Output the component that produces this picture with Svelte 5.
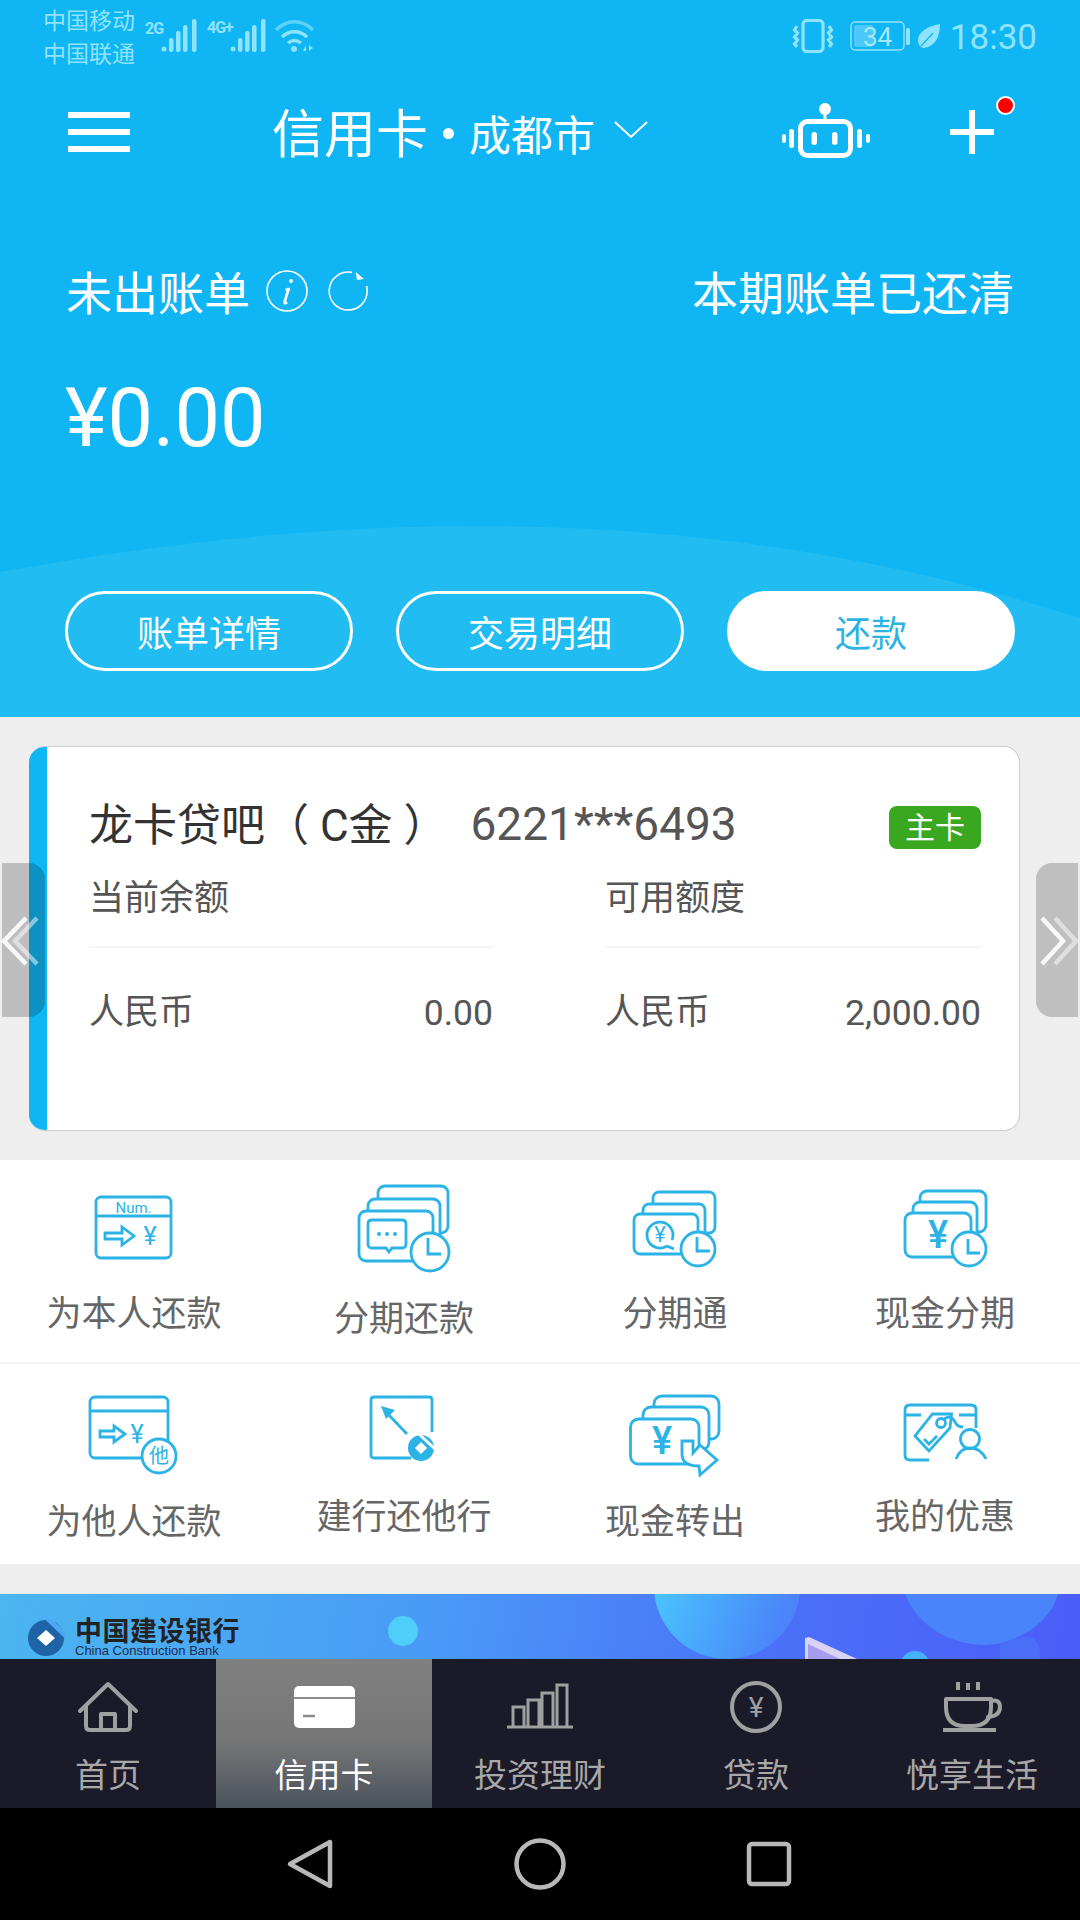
<script>
	const tabs = ['首页', '信用卡', '投资理财', '贷款', '悦享生活'];
</script>

<div class="phone">
	<header class="head">
		<svg class="wave" viewBox="0 0 1080 217" width="1080" height="217">
			<path d="M0 72C200 36 350 26 480 26C700 26 900 60 1080 118V217H0Z" fill="#20bcf2" />
		</svg>

		<div class="status">
			<div class="carriers"><span>中国移动</span><span>中国联通</span></div>
			<svg class="signal" width="172" height="36" viewBox="0 0 172 36" fill="#8fe3fd">
				<text class="net" x="0" y="16">2G</text>
				<circle cx="19" cy="31" r="2.5" />
				<rect x="24" y="20" width="4.5" height="14" rx="2" />
				<rect x="31" y="13" width="4.5" height="21" rx="2" />
				<rect x="38" y="7" width="4.5" height="27" rx="2" />
				<rect x="47" y="1" width="4.5" height="33" rx="2" />
				<text class="net" x="62" y="15">4G+</text>
				<circle cx="88" cy="31" r="2.5" />
				<rect x="93" y="20" width="4.5" height="14" rx="2" />
				<rect x="100" y="13" width="4.5" height="21" rx="2" />
				<rect x="107" y="7" width="4.5" height="27" rx="2" />
				<rect x="116" y="1" width="4.5" height="33" rx="2" />
				<g fill="none" stroke="#8fe3fd" stroke-width="3.4">
					<path d="M131 12C142 1 157 1 168 12" opacity=".6" />
					<path d="M137 19C144 12 155 12 162 19" />
					<path d="M143 25C147 22 152 22 156 25" />
				</g>
				<circle cx="149" cy="31" r="3" />
				<path d="M161 27l-3 6h3zM164 27l4 3-4 3z" />
			</svg>
			<div class="status-right">
				<svg width="42" height="34" viewBox="0 0 42 34" fill="none" stroke="#8fe3fd" stroke-width="3.2">
					<rect x="11" y="1.5" width="20" height="31" rx="4" />
					<path d="M5 7l-2.5 4 3 3-3 4 3 3-3 4 2.5 3M37 7l2.5 4-3 3 3 4-3 3 3 4-2.5 3" />
				</svg>
				<svg class="bat" width="60" height="30" viewBox="0 0 60 30">
					<rect x="1" y="1" width="53" height="28" rx="4" fill="none" stroke="#8fe3fd" stroke-width="1.5" />
					<rect x="4" y="4" width="19" height="22" rx="2" fill="#4dc8fb" />
					<rect x="56" y="7" width="4" height="17" rx="1.5" fill="#8fe3fd" />
					<text x="27.5" y="24.5" text-anchor="middle" font-size="26" fill="#a6e8fd">34</text>
				</svg>
				<svg width="22" height="24" viewBox="0 0 22 24">
					<path d="M22 0C22 12 18 22 6 24C2 24 0 20 0 16C0 8 10 2 22 0Z" fill="#8fe3fd" />
					<path d="M3 22L15 9" stroke="#0fb6f3" stroke-width="1.2" />
				</svg>
				<span class="time">18:30</span>
			</div>
		</div>

		<nav class="topbar">
			<div class="burger"><i></i><i></i><i></i></div>
			<div class="title"><span class="t-main">信用卡</span><b class="dot"></b><span class="t-city">成都市</span></div>
			<svg class="chev" width="34" height="18" viewBox="0 0 34 18" fill="none" stroke="#fff" stroke-width="2"><path d="M1 1l16 15L33 1" /></svg>
			<div class="top-right">
				<svg width="92" height="62" viewBox="0 0 92 62" fill="#fff">
					<circle cx="45" cy="10" r="6" />
					<rect x="43.5" y="12" width="3" height="9" />
					<rect x="20.5" y="22.5" width="50" height="34" rx="7" fill="none" stroke="#fff" stroke-width="5" />
					<rect x="31.5" y="33" width="5.5" height="13" rx="2.7" />
					<rect x="52" y="33" width="5.5" height="13" rx="2.7" />
					<rect x="9" y="30" width="5" height="19" rx="2.5" />
					<rect x="2" y="35" width="4" height="9" rx="2" />
					<rect x="77" y="30" width="5" height="19" rx="2.5" />
					<rect x="86" y="35" width="4" height="9" rx="2" />
				</svg>
				<div class="plus"><b class="red"></b></div>
			</div>
		</nav>

		<div class="bill">
			<span class="bill-t">未出账单</span>
			<svg class="ic-info" width="42" height="42" viewBox="0 0 42 42" fill="none" stroke="#fff" stroke-width="1.6">
				<circle cx="21" cy="21" r="20" />
				<path d="M24 19l-4.5 1M23 18l-4.5 14c-.3 1.400 1 1.600 2.500 0" stroke-width="2.6" />
				<circle cx="25" cy="11" r="2" fill="#fff" stroke="none" />
			</svg>
			<svg class="ic-ref" width="44" height="44" viewBox="0 0 44 44" fill="none" stroke="#fff" stroke-width="1.6">
				<path d="M26 3.4A19 19 0 1 0 40.5 17" />
				<path d="M29.7 3L38 10L31 11Z" fill="#fff" stroke="none" />
			</svg>
			<span class="paid bill-t">本期账单已还清</span>
		</div>
		<div class="amount">¥0.00</div>
		<div class="btns">
			<button>账单详情</button>
			<button>交易明细</button>
			<button class="solid">还款</button>
		</div>
	</header>

	<section class="card-area">
		<div class="card">
			<div class="stripe"></div>
			<div class="card-body">
				<div class="card-title">
					<span class="c-name">龙卡贷吧（ C金 ）</span>
					<span class="c-num">6221***6493</span>
					<span class="badge">主卡</span>
				</div>
				<div class="cols">
					<div class="col c1">
						<div class="lbl">当前余额</div>
						<div class="val"><span>人民币</span><span class="n">0.00</span></div>
					</div>
					<div class="col c2">
						<div class="lbl">可用额度</div>
						<div class="val"><span>人民币</span><span class="n">2,000.00</span></div>
					</div>
				</div>
			</div>
		</div>
		<div class="side left">
			<svg width="43" height="60" viewBox="0 0 43 60" fill="none" stroke-width="4.5">
				<path d="M24 8L2 31l22 23" stroke="#fff" opacity=".9" />
				<path d="M35 8L13 31l22 23" stroke="#fff" opacity=".5" />
			</svg>
		</div>
		<div class="side right">
			<svg width="42" height="60" viewBox="0 0 42 60" fill="none" stroke-width="4.5">
				<path d="M6 8l21 23L6 54" stroke="#fff" opacity=".9" />
				<path d="M19 8l21 23-21 23" stroke="#fff" opacity=".5" />
			</svg>
		</div>
	</section>

	<section class="menu">
		<div class="row">
			<div class="cell">
				<svg class="ico" width="120" height="130" viewBox="0 0 120 130">
					<rect x="21" y="36" width="75" height="61" rx="5" />
					<path d="M21 55H96M30 72H47V66L59 75L47 84V78H30Z" />
					<text class="s" x="58.5" y="52" font-size="15" text-anchor="middle">Num.</text>
					<text class="s" x="75" y="84" font-size="25" text-anchor="middle">¥</text>
				</svg>
				<span>为本人还款</span>
			</div>
			<div class="cell low">
				<svg class="ico" width="120" height="130" viewBox="0 0 120 130">
					<rect x="33" y="25" width="70" height="47" rx="7" />
					<rect x="23" y="38" width="72" height="50" rx="7" />
					<rect x="14" y="50" width="74" height="50" rx="7" />
					<path d="M27 59H57Q61 59 61 63V83Q61 87 57 87H47L44 91L41 87H27Q23 87 23 83V63Q23 59 27 59Z" />
					<circle class="s" cx="34" cy="73" r="2" />
					<circle class="s" cx="42" cy="73" r="2" />
					<circle class="s" cx="50" cy="73" r="2" />
					<circle cx="85" cy="91" r="19" />
					<path d="M83 77V93H96" />
				</svg>
				<span>分期还款</span>
			</div>
			<div class="cell">
				<svg class="ico" width="120" height="130" viewBox="0 0 120 130">
					<rect x="38" y="31" width="62" height="41" rx="6" />
					<rect x="28" y="43" width="62" height="41" rx="6" />
					<rect x="19" y="53" width="64" height="40" rx="6" />
					<path d="M52 85A13 13 0 1 1 57 79M52 85L59 88" />
					<text class="s" x="45" y="81" font-size="22" text-anchor="middle">¥</text>
					<circle cx="83" cy="88" r="17" />
					<path d="M82 76V90H95" />
				</svg>
				<span>分期通</span>
			</div>
			<div class="cell">
				<svg class="ico" width="120" height="130" viewBox="0 0 120 130">
					<rect x="35" y="30" width="66" height="41" rx="7" />
					<rect x="28" y="41" width="64" height="41" rx="7" />
					<rect x="20" y="52" width="66" height="44" rx="7" />
					<text class="s" x="53" y="87" font-size="38" font-weight="500" text-anchor="middle">¥</text>
					<circle cx="84" cy="88" r="17" />
					<path d="M83 78V92H95" />
				</svg>
				<span>现金分期</span>
			</div>
		</div>
		<div class="row second">
			<div class="cell low">
				<svg class="ico" width="120" height="130" viewBox="0 0 120 130">
					<rect x="15" y="33" width="78" height="61" rx="5" />
					<path d="M15 47H93M25 67H39V62L50 70L39 78V73H25Z" />
					<text class="s" x="62" y="79" font-size="25" text-anchor="middle">¥</text>
					<circle cx="84" cy="92" r="17" />
					<text class="s" x="84" y="99" font-size="20" text-anchor="middle">他</text>
				</svg>
				<span>为他人还款</span>
			</div>
			<div class="cell">
				<svg class="ico" width="120" height="130" viewBox="0 0 120 130">
					<path d="M84 33H29Q26 33 26 36V91Q26 94 29 94H66M87 68V36Q87 33 84 33" />
					<path d="M62 70L40 47" />
					<path class="s" d="M36 42L50 46L41 55Z" />
					<circle class="s" cx="76" cy="84" r="13" />
					<path class="w" d="M76 78L82 84L76 90L70 84Z" />
					<path class="cut" d="M74 70L91 86" />
				</svg>
				<span>建行还他行</span>
			</div>
			<div class="cell low">
				<svg class="ico" width="120" height="130" viewBox="0 0 120 130">
					<rect x="39" y="32" width="65" height="43" rx="8" />
					<rect x="28" y="43" width="66" height="43" rx="8" />
					<rect x="15.5" y="55" width="68.5" height="45" rx="8" />
					<text class="s" x="47" y="90" font-size="38" font-weight="500" text-anchor="middle">¥</text>
					<path class="hollow" d="M67 77H78V89L85 81L102 96L85 111L84 102Q67 102 67 90Z" />
				</svg>
				<span>现金转出</span>
			</div>
			<div class="cell">
				<svg class="ico" width="120" height="130" viewBox="0 0 120 130">
					<path d="M44 96H25Q20 96 20 91V46Q20 41 25 41H86Q91 41 91 46V64M20 51H36M74 51H91" />
					<path d="M47.5 50H66.5L65 64L44 87L30 72Z" />
					<circle cx="56" cy="59" r="4.5" />
					<path d="M59 55Q66 50 70 58Q72 63 78 63M39 75L44 80L52 72" />
					<circle cx="85" cy="75" r="9.5" />
					<path d="M71 95Q75 84 85 84Q96 84 101 95" />
				</svg>
				<span>我的优惠</span>
			</div>
		</div>
	</section>

	<div class="gap"></div>

	<section class="banner">
		<svg class="art" width="1080" height="65" viewBox="0 0 1080 65">
			<defs>
				<linearGradient id="blob" x1="0" y1="0" x2="1" y2="0.4">
					<stop offset="0" stop-color="#49d3ff" />
					<stop offset="1" stop-color="#4a86f9" />
				</linearGradient>
			</defs>
			<circle cx="403" cy="37" r="15" fill="#4fcdfb" />
			<circle cx="727" cy="-8" r="73" fill="url(#blob)" />
			<path d="M905 0C918 32 950 51 985 51C1005 50 1020 40 1032 44C1040 47 1040 58 1040 65H1000L1000 0Z" fill="#4a6ef8" />
			<path d="M905 0C918 32 950 51 985 51C1015 50 1050 30 1058 0Z" fill="#4a84fa" />
			<path d="M805 44L809 43L857 65H805Z" fill="#d9d4f5" />
			<path d="M808 50L840 65H808Z" fill="#a69cf0" />
			<circle cx="915" cy="72" r="15" fill="#45b0fb" />
		</svg>
		<svg class="logo" width="38" height="38" viewBox="0 0 38 38">
			<circle cx="19" cy="19" r="18" fill="#1e63a6" />
			<path d="M19 11L28 19L19 27L10 19Z" fill="#fff" />
			<path d="M20 -1L40 18" stroke="#4ea8f1" stroke-width="5" />
		</svg>
		<div class="bank">
			<div class="bank-cn">中国建设银行</div>
			<div class="bank-en">China Construction Bank</div>
		</div>
	</section>

	<footer class="tabs">
		{#each tabs as t, i}
			<div class="tab" class:on={i === 1}>
				<svg width="80" height="62" viewBox="0 0 80 62" fill="none" stroke="#a0a0a0" stroke-width="4" stroke-linejoin="round" stroke-linecap="round">
					{#if i === 0}
						<path d="M12 32L40 5L68 32M18 27V47Q18 51 22 51H58Q62 51 62 47V27M33 50V35H47V50" />
					{:else if i === 1}
						<rect x="10" y="7" width="61" height="42" rx="5" fill="#fff" stroke="none" />
						<path d="M10 19H71" stroke="#8a8a8a" stroke-width="2" stroke-linecap="butt" />
						<path d="M19 37H31" stroke="#8a8a8a" stroke-width="2.5" stroke-linecap="butt" />
					{:else if i === 2}
						<path d="M7 48H73M13 48V28H24V48M28 48V21H39V48M42 48V14H53V48M57 48V6H67V48" stroke-width="3" stroke-linecap="butt" stroke-linejoin="miter" />
					{:else if i === 3}
						<circle cx="40" cy="28" r="24" />
						<text x="40" y="38" text-anchor="middle" font-size="28" fill="#a0a0a0" stroke="none">¥</text>
					{:else}
						<path d="M26 3V11M36 4V11M46 3V11" stroke-linecap="butt" />
						<path d="M14 20H59V28Q59 47 40 47H33Q14 47 14 28Z" />
						<path d="M59 22Q68 20 68 28Q68 37 56 38" />
						<path d="M11 51H64" stroke-linecap="butt" />
					{/if}
				</svg>
				<span>{t}</span>
			</div>
		{/each}
	</footer>

	<div class="navbar">
		<svg width="52" height="56" viewBox="0 0 52 56" fill="none" stroke="#b8b8b8" stroke-width="4.5" stroke-linejoin="round">
			<path d="M47 6V50L7 28Z" />
		</svg>
		<svg class="nav-c" width="60" height="60" viewBox="0 0 60 60" fill="none" stroke="#b8b8b8" stroke-width="4.5"><circle cx="30" cy="30" r="23.5" /></svg>
		<svg class="nav-s" width="52" height="52" viewBox="0 0 52 52" fill="none" stroke="#b8b8b8" stroke-width="4.5"><rect x="6" y="6" width="40" height="40" rx="3" /></svg>
	</div>
</div>

<style>
	:global(body) { margin: 0; background: #eee; }
	.phone {
		width: 1080px; height: 1920px; overflow: hidden;
		display: flex; flex-direction: column;
		font-family: Roboto, "Noto Sans CJK SC", sans-serif;
	}
	svg { display: block; flex-shrink: 0; }
	svg text { font-family: Roboto, "Noto Sans CJK SC", sans-serif; }
	.signal .net { font-size: 16px; font-weight: 700; letter-spacing: -1px; }

	.head { position: relative; height: 717px; flex-shrink: 0; background: #0fb6f3; color: #fff; display: flex; flex-direction: column; }
	.wave { position: absolute; left: 0; top: 500px; }
	.status, .topbar, .bill, .amount, .btns { position: relative; }

	.status { height: 70px; display: flex; color: #8fe3fd; padding: 0 43px; }
	.carriers { display: flex; flex-direction: column; font-size: 23px; line-height: 33px; padding-top: 5px; width: 102px; }
	.signal { margin-top: 18px; }
	.status-right { margin-left: auto; display: flex; align-items: center; height: 72px; }
	.bat { margin-left: 16px; }
	.status-right svg:nth-child(3) { margin-left: 8px; }
	.time { font-size: 35px; margin-left: 10px; line-height: 64px; margin-top: 4px; }

	.topbar { height: 80px; margin-top: 23px; display: flex; align-items: center; padding-left: 68px; }
	.burger { width: 62px; height: 40px; display: flex; flex-direction: column; justify-content: space-between; margin-top: -2px; }
	.burger i { display: block; height: 6px; background: #fff; }
	.title { margin-left: 142px; display: flex; align-items: center; margin-top: -6px; }
	.t-main { font-size: 52px; }
	.dot { width: 11px; height: 11px; border-radius: 50%; background: #fff; margin: 6px 15px 0 15px; }
	.t-city { font-size: 42px; margin-top: 4px; }
	.chev { margin-left: 19px; margin-top: -6px; }
	.top-right { margin-left: auto; padding-right: 86px; display: flex; align-items: center; }
	.top-right svg { margin-top: -7px; }
	.plus {
		position: relative; width: 44px; height: 44px; margin-left: 78px; margin-top: -2px;
		background: linear-gradient(#fff, #fff) center / 6px 44px no-repeat, linear-gradient(#fff, #fff) center / 44px 6px no-repeat;
	}
	.red { position: absolute; left: 46px; top: -14px; width: 15px; height: 15px; border-radius: 50%; background: #f00; border: 2px solid #fff; }

	.bill { margin-top: 95px; height: 50px; padding: 0 66px; display: flex; align-items: center; font-size: 46px; }
	.bill-t { margin-top: -7px; }
	.ic-info { margin-left: 16px; margin-top: -4px; }
	.ic-ref { margin-left: 18px; margin-top: -4px; }
	.paid { margin-left: auto; }
	.amount { margin-top: 56px; height: 90px; line-height: 90px; padding-left: 65px; font-size: 81px; }
	.btns { margin-top: 127px; padding: 0 65px; display: flex; gap: 43px; }
	.btns button {
		width: 288px; height: 80px; border-radius: 40px; border: 3px solid #fff; background: none;
		color: #fff; font: inherit; font-size: 36px; padding: 0;
	}
	.btns .solid { background: #fff; color: #2bb3e3; }

	.card-area { position: relative; height: 443px; flex-shrink: 0; background: #eee; padding: 29px 60px 0 29px; box-sizing: border-box; }
	.card {
		height: 385px; display: flex; overflow: hidden; background: #fff; color: #555; box-sizing: border-box;
		border: 1.5px solid #ccc; border-left: none; border-radius: 16px;
	}
	.stripe { width: 18px; background: #0fb6f3; margin: -2px 0; }
	.card-body { flex: 1; padding: 49px 38px 0 42px; }
	.card-title { height: 56px; display: flex; align-items: center; font-size: 44px; }
	.c-name { color: #333; margin-top: -5px; }
	.c-num { font-size: 46px; margin-left: 23px; }
	.badge { margin-left: auto; width: 92px; height: 43px; line-height: 43px; border-radius: 8px; text-align: center; background: #39a820; color: #fff; font-size: 30px; margin-top: 6px; }
	.cols { display: flex; margin-top: 24px; gap: 112px; }
	.col { font-size: 35px; }
	.c1 { width: 404px; }
	.c2 { width: 376px; }
	.lbl { height: 46px; line-height: 46px; padding: 0 0 24px; border-bottom: 2px solid #f5f5f5; }
	.val { margin-top: 42px; height: 46px; line-height: 46px; display: flex; justify-content: space-between; }
	.n { font-size: 35.5px; }

	.side { position: absolute; top: 146px; height: 154px; background: rgba(0, 0, 0, 0.2); display: flex; align-items: center; }
	.side.left { left: 2px; width: 43px; border-radius: 0 16px 16px 0; }
	.side.right { right: 2px; width: 42px; background: #bfbfbf; border-radius: 16px 0 0 16px; }

	.menu { background: #fff; flex-shrink: 0; }
	.row { height: 202px; display: grid; grid-template-columns: repeat(4, 270px); padding-top: 1px; box-sizing: border-box; }
	.second { height: 202px; border-top: 2px solid #f5f5f5; padding-top: 0; }
	.cell { display: flex; flex-direction: column; align-items: center; color: #666; font-size: 35px; }
	.cell span { line-height: 46px; margin-top: 1px; }
	.cell:nth-child(-n+2) span { margin-left: -2px; }
	.cell.low span { margin-top: 6px; }
	.ico { fill: #fff; stroke: #2bb3e6; stroke-width: 2.8; }
	.ico path { fill: none; }
	.ico .hollow { fill: #fff; }
	.ico .s, .ico text { fill: #2bb3e6; stroke: none; }
	.ico .w { fill: #fff; stroke: none; }
	.ico .cut { stroke: #fff; stroke-width: 3; }

	.gap { height: 30px; flex-shrink: 0; background: #eee; }

	.banner {
		position: relative; height: 65px; flex-shrink: 0; overflow: hidden;
		display: flex; align-items: flex-start; padding-left: 27px; gap: 10px;
		background: linear-gradient(100deg, #4bb6f0 0%, #4a9af7 40%, #4a72f8 70%, #4a5ef7 100%);
	}
	.art { position: absolute; left: 0; top: 0; }
	.logo, .bank { position: relative; }
	.logo { margin-top: 25px; }
	.bank { margin-top: 26px; }
	.bank-cn { font-size: 27px; font-weight: 700; line-height: 24px; letter-spacing: 0.5px; color: #222; white-space: nowrap; }
	.bank-en { font-family: "Liberation Sans", sans-serif; font-size: 13px; line-height: 13px; color: #1c2b50; white-space: nowrap; }

	.tabs { height: 149px; flex-shrink: 0; background: #1b1a29; display: grid; grid-template-columns: repeat(5, 216px); }
	.tab { display: flex; flex-direction: column; align-items: center; padding-top: 20px; color: #a8a8a8; font-size: 33px; }
	.tab span { line-height: 40px; margin-top: 15px; }
	.tab.on { background: linear-gradient(#808080 0%, #767676 55%, #4a525c 100%); color: #fff; }

	.navbar { flex: 1; background: #000; display: flex; align-items: center; padding-left: 283px; }
	.nav-c { margin-left: 175px; }
	.nav-s { margin-left: 173px; }
</style>
